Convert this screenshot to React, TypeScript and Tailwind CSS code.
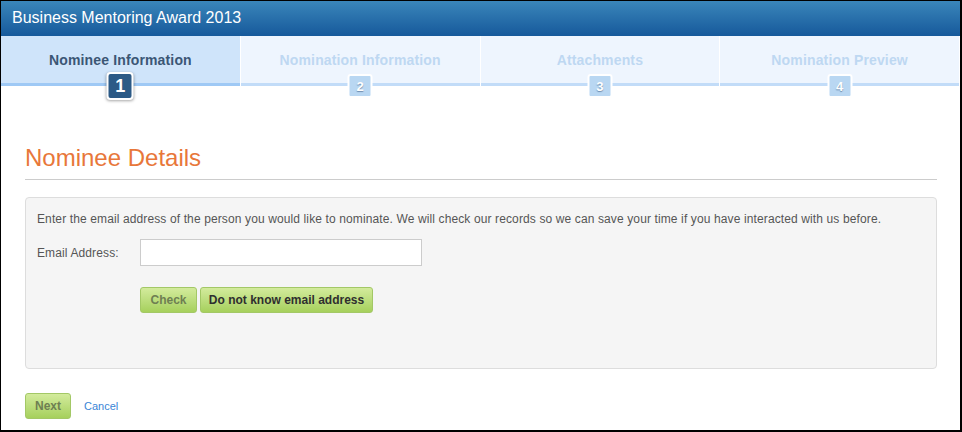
const steps = [
  { label: "Nominee Information", n: 1 },
  { label: "Nomination Information", n: 2 },
  { label: "Attachments", n: 3 },
  { label: "Nomination Preview", n: 4 },
];

function StepTab({ label, n, active }: { label: string; n: number; active: boolean }) {
  return (
    <div
      className={`relative flex-1 h-[50px] border-r border-white last:border-r-0 ${
        active ? "bg-[#cfe4fa]" : "bg-[#eef5fe]"
      }`}
    >
      <div
        className={`pt-[16px] text-center text-[14px] font-bold leading-[17px] tracking-[0.15px] ${
          active ? "text-[#3b5675]" : "text-[#bed8f2]"
        }`}
      >
        {label}
      </div>
      <div
        className={`absolute left-0 right-0 bottom-0 h-[3px] ${
          active ? "bg-[#9fc9f5]" : "bg-[#c2dcf8]"
        }`}
      />
      {active ? (
        <div className="absolute left-1/2 -translate-x-1/2 top-[36px] w-[27px] h-[28px] rounded-[4px] border-2 border-white bg-[#2c5a86] shadow-[0_1px_3px_rgba(0,0,0,0.35)] flex items-center justify-center text-white font-bold text-[18px] leading-none">
          1
        </div>
      ) : (
        <div className="absolute left-1/2 -translate-x-1/2 top-[38px] w-[25px] h-[24px] rounded-[3px] border-2 border-white bg-[#b9d7f2] flex items-center justify-center text-white font-bold text-[13px] leading-none [text-shadow:0_1px_1px_rgba(60,90,130,0.6)]">
          {n}
        </div>
      )}
    </div>
  );
}

function GreenButton({
  children,
  muted,
  className,
}: {
  children: React.ReactNode;
  muted?: boolean;
  className?: string;
}) {
  return (
    <button
      className={`h-[26px] rounded-[3px] border border-[#a3c866] bg-gradient-to-b from-[#d3eb9c] to-[#a6d05c] text-[12px] font-bold ${
        muted ? "text-[#6e7f52]" : "text-[#2f2f2f]"
      } ${className ?? ""}`}
    >
      {children}
    </button>
  );
}

export default function App() {
  return (
    <div className="w-[962px] h-[432px] overflow-hidden bg-white border-l border-t border-r-2 border-b-2 border-black font-['Liberation_Sans',Arial,sans-serif]">
      {/* header */}
      <div className="h-[35px] bg-gradient-to-b from-[#3a86ba] to-[#16599b] pl-[11px] pt-[7px] text-white text-[16px] leading-[19px]">
        Business Mentoring Award 2013
      </div>

      {/* step tabs */}
      <div className="flex mr-[1px]">
        {steps.map((s) => (
          <StepTab key={s.n} label={s.label} n={s.n} active={s.n === 1} />
        ))}
      </div>

      <div className="px-[24px] pr-[23px]">
        <h1 className="mt-[58px] text-[24px] leading-[28px] text-[#e8773a] pb-[7px] border-b border-[#cccccc]">
          Nominee Details
        </h1>

        <div className="mt-[17px] h-[172px] rounded-[4px] border border-[#dddddd] bg-[#f5f5f5] px-[11px] pt-[14px]">
          <p className="text-[12px] leading-[15px] text-[#555555] tracking-[0.12px]">
            Enter the email address of the person you would like to nominate. We will check our records so we can save your time if you have interacted with us before.
          </p>
          <div className="mt-[12px] flex items-center">
            <label className="w-[103px] text-[12px] text-[#555555] tracking-[0.12px]">Email Address:</label>
            <input
              type="text"
              className="w-[282px] h-[27px] border border-[#cccccc] bg-white outline-none"
            />
          </div>
          <div className="mt-[21px] ml-[103px] flex gap-[3px]">
            <GreenButton muted className="w-[57px]">
              Check
            </GreenButton>
            <GreenButton className="w-[173px]">Do not know email address</GreenButton>
          </div>
        </div>

        <div className="mt-[24px] flex items-center gap-[13px]">
          <GreenButton muted className="w-[46px] text-[#5d6d3d]">
            Next
          </GreenButton>
          <a className="text-[11px] text-[#3a85d6] cursor-pointer">Cancel</a>
        </div>
      </div>
    </div>
  );
}
